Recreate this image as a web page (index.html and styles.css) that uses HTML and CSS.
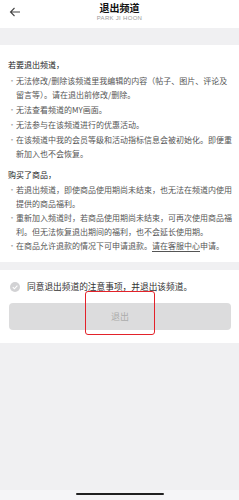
FILE: index.html
```html
<!DOCTYPE html>
<html lang="zh">
<head>
<meta charset="utf-8">
<link rel="stylesheet" href="styles.css">
</head>
<body>
<div class="page">
  <header class="top">
    <svg class="back" width="12" height="10" viewBox="0 0 12 10"><path d="M11 5H1.5M5.5 1L1.5 5l4 4" fill="none" stroke="#444" stroke-width="1.1"/></svg>
    <div class="title">退出频道</div>
    <div class="sub">PARK JI HOON</div>
  </header>
  <div class="band"></div>
  <section class="notes">
    <h2 class="head">若要退出频道，</h2>
    <ul class="list">
      <li>无法修改/删除该频道里我编辑的内容（帖子、图片、评论及留言等）。请在退出前修改/删除。</li>
      <li>无法查看频道的MY画面。</li>
      <li>无法参与在该频道进行的优惠活动。</li>
      <li>在该频道中我的会员等级和活动指标信息会被初始化。即便重新加入也不会恢复。</li>
    </ul>
    <h2 class="head head2">购买了商品，</h2>
    <ul class="list list2">
      <li>若退出频道，即使商品使用期尚未结束，也无法在频道内使用提供的商品福利。</li>
      <li>重新加入频道时，若商品使用期尚未结束，可再次使用商品福利。但无法恢复退出期间的福利，也不会延长使用期。</li>
      <li>在商品允许退款的情况下可申请退款。<u>请在客服中心</u>申请。</li>
    </ul>
  </section>
  <div class="band small"></div>
  <section class="action">
    <label class="agree">
      <span class="check"><svg width="10" height="10" viewBox="0 0 10 10"><path d="M2.8 5.2l1.6 1.6 3-3.2" fill="none" stroke="#fff" stroke-width="1.1"/></svg></span>
      <span>同意退出频道的注意事项，并退出该频道。</span>
    </label>
    <button class="btn">退出</button>
    <div class="mark"></div>
  </section>
  <div class="rest"></div>
  <div class="home"><span class="bar"></span></div>
</div>
</body>
</html>
```
FILE: styles.css
```css
html, body {
  margin: 0;
  padding: 0;
  background: #f0f0f2;
}
body {
  font-family: "Noto Sans CJK SC", "Noto Sans", sans-serif;
  color: #444;
}
.page {
  width: 239px;
  height: 500px;
  display: flex;
  flex-direction: column;
  overflow: hidden;
}
.top {
  position: relative;
  height: 28px;
  background: #fff;
  display: flex;
  flex-direction: column;
  align-items: center;
}
.back {
  position: absolute;
  left: 9px;
  top: 7px;
}
.title {
  margin-top: 1px;
  font-size: 10px;
  line-height: 13px;
  font-weight: 700;
  color: #111;
}
.sub {
  font-family: "Liberation Sans", sans-serif;
  font-size: 6px;
  line-height: 8px;
  color: #999;
  letter-spacing: 0.3px;
}
.band {
  height: 17px;
  background: #f0f0f2;
}
.band.small {
  height: 8px;
}
.notes {
  background: #fff;
  padding: 13px 5px 9px 8px;
}
.head {
  margin: 0 0 2px 0;
  font-size: 8px;
  line-height: 14px;
  font-weight: 400;
  color: #222;
}
.head2 {
  margin-top: 7px;
  margin-bottom: 1px;
}
.list {
  list-style: none;
  margin: 0;
  padding: 0;
  display: flex;
  flex-direction: column;
  gap: 1px;
}
.list2 {
  gap: 0;
}
.list li {
  position: relative;
  padding-left: 8px;
  font-size: 8px;
  line-height: 14px;
  color: #555;
}
.list li::before {
  content: "·";
  position: absolute;
  left: 0;
  top: 0;
  color: #aaa;
}
.list u {
  text-decoration-thickness: 0.5px;
  text-underline-offset: 1.5px;
}
.action {
  position: relative;
  background: #fff;
  padding: 9px 8px 13px 9px;
  display: flex;
  flex-direction: column;
  gap: 8px;
}
.agree {
  display: flex;
  align-items: center;
  gap: 7px;
  padding-left: 1px;
  font-size: 8.7px;
  line-height: 16px;
  color: #333;
}
.check {
  width: 10px;
  height: 10px;
  border-radius: 50%;
  background: #d2d2d4;
  display: flex;
}
.btn {
  height: 27px;
  width: 222px;
  border: none;
  border-radius: 4px;
  background: #dcdcdd;
  color: #acacac;
  font-family: "Noto Sans CJK SC", sans-serif;
  font-size: 9px;
  padding: 0;
}
.mark {
  position: absolute;
  left: 85px;
  top: 21px;
  width: 68px;
  height: 42px;
  border: 1.5px solid #e3222a;
  border-radius: 3px;
}
.rest {
  flex: 1;
  background: #f0f0f2;
}
.home {
  height: 10px;
  background: #f5f5f7;
  display: flex;
  justify-content: center;
  align-items: flex-start;
}
.bar {
  margin-top: 3px;
  width: 88px;
  height: 2px;
  border-radius: 1px;
  background: #222;
}
```
